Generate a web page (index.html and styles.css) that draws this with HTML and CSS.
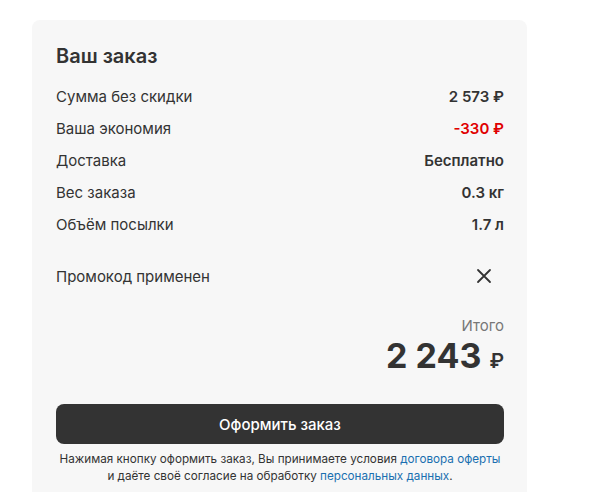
FILE: index.html
```html
<!DOCTYPE html>
<html lang="ru">
<head>
    <meta charset="UTF-8">
    <meta name="viewport" content="width=device-width, initial-scale=1.0">
    <title>Ваш заказ</title>
    <link rel="stylesheet" href="styles.css">
</head>
<body>

    <div class="order-card">
        <h2 class="order-title">Ваш заказ</h2>

        <div class="order-rows">
            <div class="order-row">
                <span>Сумма без скидки</span>
                <span class="value">2 573 ₽</span>
            </div>
            <div class="order-row">
                <span>Ваша экономия</span>
                <span class="value discount">-330 ₽</span>
            </div>
            <div class="order-row">
                <span>Доставка</span>
                <span class="value">Бесплатно</span>
            </div>
            <div class="order-row">
                <span>Вес заказа</span>
                <span class="value">0.3 кг</span>
            </div>
            <div class="order-row">
                <span>Объём посылки</span>
                <span class="value">1.7 л</span>
            </div>
        </div>

        <div class="promo-row">
            <span>Промокод применен</span>
            <button class="promo-remove" aria-label="Удалить промокод">
                <svg width="16" height="16" viewBox="0 0 16 16">
                    <path d="M2 2 L14 14 M14 2 L2 14" stroke="#333" stroke-width="1.8" stroke-linecap="round" fill="none"/>
                </svg>
            </button>
        </div>

        <div class="total">
            <div class="total-label">Итого</div>
            <div class="total-sum">2 243 <span class="currency">₽</span></div>
        </div>

        <button class="checkout-btn">Оформить заказ</button>

        <p class="terms">
            Нажимая кнопку оформить заказ, Вы принимаете условия <a href="#">договора оферты</a><br>
            и даёте своё согласие на обработку <a href="#">персональных данных</a>.
        </p>
    </div>

</body>
</html>
```

FILE: styles.css
```css
body {
    font-family: "Inter", "Noto Sans", sans-serif;
    margin: 0;
    padding: 0;
    background-color: #fff;
    color: #333;
}
.order-card {
    width: 495px;
    box-sizing: border-box;
    margin: 20px 0 0 32px;
    padding: 24px 23px 0 24px;
    min-height: 472px;
    background-color: #f7f7f7;
    border-radius: 8px 8px 0 0;
}
.order-title {
    margin: 0 0 12px;
    font-size: 20px;
    line-height: 24px;
    font-weight: 600;
}
.order-row {
    display: flex;
    justify-content: space-between;
    align-items: center;
    height: 32px;
    font-size: 15px;
}
.order-row .value {
    font-weight: 600;
}
.order-row .discount {
    color: #e00000;
}
.promo-row {
    display: flex;
    justify-content: space-between;
    align-items: center;
    height: 32px;
    margin-top: 20px;
    font-size: 15px;
}
.promo-remove {
    background: none;
    border: none;
    padding: 0;
    margin-right: 12px;
    width: 16px;
    height: 16px;
    cursor: pointer;
    display: flex;
}
.total {
    margin-top: 24px;
    text-align: right;
}
.total-label {
    font-size: 15px;
    line-height: 20px;
    color: #777;
}
.total-sum {
    font-size: 34px;
    line-height: 40px;
    font-weight: 700;
}
.total-sum .currency {
    font-size: 20px;
    font-weight: 600;
}
.checkout-btn {
    display: block;
    width: 100%;
    height: 40px;
    margin-top: 23px;
    background-color: #333;
    color: #fff;
    border: none;
    border-radius: 8px;
    font-family: inherit;
    font-size: 15px;
    font-weight: 500;
    cursor: pointer;
}
.terms {
    margin: 7px 0 0;
    font-size: 11.7px;
    line-height: 17px;
    text-align: center;
    color: #333;
    white-space: nowrap;
}
.terms a {
    color: #1a6fb0;
    text-decoration: none;
}
```
